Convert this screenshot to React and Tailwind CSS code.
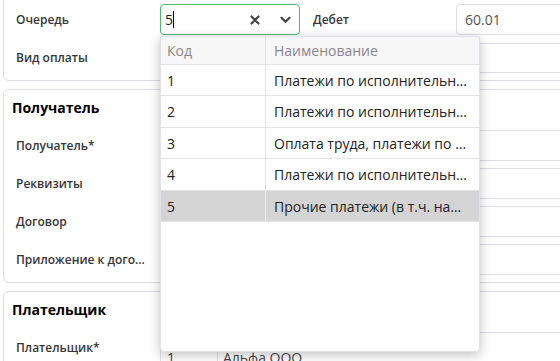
import React from "react";

const codes = [
  { code: "1", name: "Платежи по исполнительным документам" },
  { code: "2", name: "Платежи по исполнительным документам" },
  { code: "3", name: "Оплата труда, платежи по налогам" },
  { code: "4", name: "Платежи по исполнительным документам" },
  { code: "5", name: "Прочие платежи (в т.ч. налоги и сборы)" },
];

const rowHeights = ["h-[31px]", "h-[32px]", "h-[31px]", "h-[32px]", "h-[31px]"];

function Label({ children, className = "" }) {
  return (
    <div
      className={`w-[148px] shrink-0 pl-1 pr-2 truncate text-[12px] font-semibold text-[#363636] ${className}`}
    >
      {children}
    </div>
  );
}

function Field({ h = "h-[31px]", children }) {
  return (
    <div
      className={`${h} flex-1 flex items-center px-2 border border-[#dedee6] rounded text-[14px] text-[#555]`}
    >
      {children}
    </div>
  );
}

function Card({ title, children, className = "" }) {
  return (
    <div className={`border border-[#dcdce4] rounded-md px-2 ${className}`}>
      {title && (
        <div className="h-[22px] leading-[22px] mb-[11px] text-[14px] font-bold text-black">
          {title}
        </div>
      )}
      {children}
    </div>
  );
}

export default function App() {
  return (
    <div className="relative w-[560px] h-[361px] overflow-hidden bg-white font-['Open_Sans',sans-serif]">
      <div className="flex flex-col gap-2 pl-[3px] w-[780px] -mt-[5px]">
        {/* ---- card 1 ---- */}
        <Card className="pt-2 pb-[7px]">
          <div className="flex items-center h-[31px]">
            <Label>Очередь</Label>
            <div className="w-[140px] h-[31px] shrink-0 flex items-center pl-1 pr-2 border border-[#4cb870] rounded">
              <span className="text-[14px] text-[#222]">5</span>
              <span className="w-px h-[17px] bg-black" />
              <div className="flex-1" />
              <svg width="10" height="10" viewBox="0 0 10 10" className="mr-[20px]">
                <path d="M1.5 1.5 L8.5 8.5 M8.5 1.5 L1.5 8.5" stroke="#444" strokeWidth="2.2" strokeLinecap="round" />
              </svg>
              <svg width="11" height="8" viewBox="0 0 11 8">
                <path d="M1.5 1.8 L5.5 5.8 L9.5 1.8" fill="none" stroke="#444" strokeWidth="2.2" strokeLinecap="round" strokeLinejoin="round" />
              </svg>
            </div>
            <div className="ml-[13px] w-[143px] shrink-0 text-[12px] font-semibold text-[#363636]">
              Дебет
            </div>
            <Field>60.01</Field>
          </div>
          <div className="flex items-center mt-2 h-[30px]">
            <Label>Вид оплаты</Label>
            <Field h="h-[30px]" />
          </div>
        </Card>

        {/* ---- card 2 ---- */}
        <Card title="Получатель" className="pt-[7px] pb-[7px]">
          <div className="flex flex-col gap-[7px]">
            {["Получатель*", "Реквизиты", "Договор", "Приложение к договору"].map((l) => (
              <div key={l} className="flex items-center h-[31px]">
                <Label>{l}</Label>
                <Field />
              </div>
            ))}
          </div>
        </Card>

        {/* ---- card 3 ---- */}
        <Card title="Плательщик" className="pt-[7px] pb-2">
          <div className="flex items-start">
            <Label className="mt-[7px]">Плательщик*</Label>
            <div className="flex-1 h-[50px] flex border border-[#dedee6] rounded text-[14px] text-[#444]">
              <div className="w-[57px] flex items-center pl-[6px] border-r border-[#dedee6]">1</div>
              <div className="flex items-center pl-[5px]">Альфа ООО</div>
            </div>
          </div>
        </Card>
      </div>

      {/* ---- dropdown ---- */}
      <div className="absolute left-[160px] top-[36px] w-[320px] h-[316px] bg-white border border-[#e2e2e8] rounded-b shadow-[0_3px_12px_rgba(0,0,0,0.25)] z-10 text-[14px]">
        <div className="flex h-[28px] bg-[#f7f7f7] border-b border-[#e4e4e8] text-[#888]">
          <div className="w-[105px] pl-[6px] flex items-center border-r border-[#e4e4e8]">Код</div>
          <div className="flex-1 pl-2 flex items-center">Наименование</div>
        </div>
        {codes.map((c, i) => (
          <div
            key={c.code}
            className={`flex ${rowHeights[i]} border-b border-[#e4e4e8] text-[#222] ${
              c.code === "5" ? "bg-[#d4d4d4]" : ""
            }`}
          >
            <div
              className={`w-[105px] pl-[6px] flex items-center border-r ${
                c.code === "5" ? "border-[#ececec]" : "border-[#e4e4e8]"
              }`}
            >
              {c.code}
            </div>
            <div className="flex-1 min-w-0 pl-2 pr-3 flex items-center">
              <span className="truncate">{c.name}</span>
            </div>
          </div>
        ))}
      </div>
    </div>
  );
}
